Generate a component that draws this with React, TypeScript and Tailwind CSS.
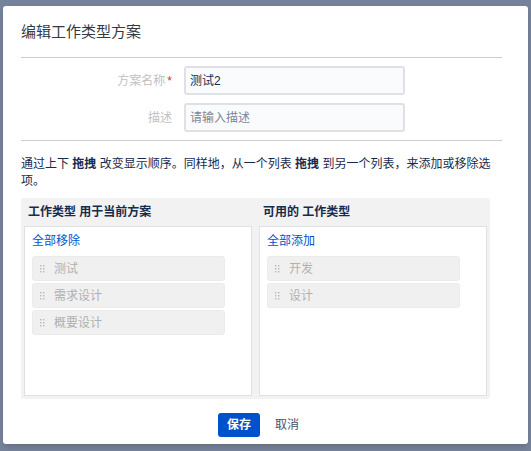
import React from "react";

const FONT = '"Liberation Sans", "Noto Sans CJK SC", sans-serif';

function Handle() {
  return (
    <svg width="5" height="8" viewBox="0 0 5 8" className="shrink-0">
      {[0, 1].map((c) =>
        [0, 1, 2].map((r) => (
          <rect key={`${c}-${r}`} x={c * 3} y={r * 3} width="1.4" height="1.4" fill="#b8b8b8" />
        ))
      )}
    </svg>
  );
}

function Item({ label }: { label: string }) {
  return (
    <div className="w-[193px] h-[25px] flex items-center rounded-[3px] bg-[#f0f0f0] border border-[#ebebeb] pl-[7px]">
      <Handle />
      <span className="ml-[9px] text-[12px] text-[#b0b0b0] leading-none">{label}</span>
    </div>
  );
}

function ListBox({ link, items }: { link: string; items: string[] }) {
  return (
    <div className="flex-1 bg-white border border-[#e1e1e1] pt-[6px] px-[7px]">
      <div className="text-[12px] leading-[17px] text-[#0052cc]">{link}</div>
      <div className="mt-[6px] flex flex-col gap-[2px]">
        {items.map((i) => (
          <Item key={i} label={i} />
        ))}
      </div>
    </div>
  );
}

export default function App() {
  return (
    <div className="w-[531px] h-[451px] bg-[#76829a] overflow-hidden pt-[6px] pl-[3px]" style={{ fontFamily: FONT }}>
      <div className="w-[525px] h-[438px] bg-white rounded-[3px] shadow-md pl-[18px] pr-[26px] pt-[14px] flex flex-col">
        <div className="h-[24px] leading-[24px] text-[15px] text-[#333a45]">编辑工作类型方案</div>
        <div className="mt-[13px] h-px bg-[#cccccc]" />

        <div className="mt-[8px] flex flex-col gap-[8px]">
          <div className="flex items-center">
            <div className="w-[153px] text-right text-[12px] text-[#c1c1c1] pr-[2px]">
              方案名称<span className="text-[#de350b] ml-[2px]">*</span>
            </div>
            <div className="ml-[10px] w-[221px] h-[29px] border-2 border-[#dfe1e6] bg-[#fafbfc] rounded-[3px] flex items-center pl-[4px] text-[12px] text-[#172b4d]">
              测试2
            </div>
          </div>
          <div className="flex items-center">
            <div className="w-[153px] text-right text-[12px] text-[#c1c1c1] pr-[2px]">描述</div>
            <div className="ml-[10px] w-[221px] h-[29px] border-2 border-[#dfe1e6] bg-[#fafbfc] rounded-[3px] flex items-center pl-[4px] text-[12px] text-[#7a869a]">
              请输入描述
            </div>
          </div>
        </div>

        <div className="mt-[8px] h-px bg-[#cccccc]" />

        <p className="mt-[15px] text-[12px] leading-[17px] text-[#172b4d]">
          通过上下 <b>拖拽</b> 改变显示顺序。同样地，从一个列表 <b>拖拽</b> 到另一个列表，来添加或移除选项。
        </p>

        <div className="mt-[8px] w-[469px] h-[201px] bg-[#f2f2f2] rounded-[3px] px-[3px] pb-[3px] flex gap-[7px]">
          <div className="flex-1 flex flex-col">
            <div className="h-[28px] flex items-center pl-[4px] text-[12px] font-bold text-[#172b4d]">工作类型 用于当前方案</div>
            <ListBox link="全部移除" items={["测试", "需求设计", "概要设计"]} />
          </div>
          <div className="flex-1 flex flex-col">
            <div className="h-[28px] flex items-center pl-[4px] text-[12px] font-bold text-[#172b4d]">可用的 工作类型</div>
            <ListBox link="全部添加" items={["开发", "设计"]} />
          </div>
        </div>

        <div className="mt-[14px] flex justify-center gap-[7px] pl-[2px]">
          <button className="h-[24px] px-[9px] rounded-[3px] bg-[#0052cc] text-white text-[12px] font-bold">保存</button>
          <button className="h-[24px] px-[8px] text-[12px] text-[#42526e]">取消</button>
        </div>
      </div>
    </div>
  );
}
